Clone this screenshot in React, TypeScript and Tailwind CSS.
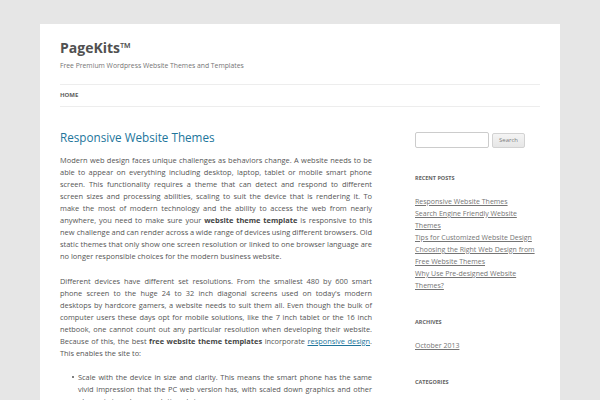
import React from "react";

const recentPosts = [
  "Responsive Website Themes",
  "Search Engine Friendly Website Themes",
  "Tips for Customized Website Design",
  "Choosing the Right Web Design from Free Website Themes",
  "Why Use Pre-designed Website Themes?",
];

const App = () => {
  return (
    <div className="min-h-[400px] bg-[#e6e6e6] pt-[24px] pl-[40px] pr-[40px] font-['Open_Sans',sans-serif]">
      <div className="bg-white px-[20px] pb-[40px]">
        {/* header */}
        <header className="pt-[16px]">
          <h1 className="text-[14px] leading-[16px] font-bold text-[#515151]">PageKits™</h1>
          <p className="mt-[5px] text-[6.8px] leading-[10px] text-[#757575]">
            Free Premium Wordpress Website Themes and Templates
          </p>
        </header>

        <nav className="mt-[13px] h-[23px] border-y border-[#ededed] flex items-center">
          <span className="text-[6px] font-bold uppercase text-[#5e5e5e]">Home</span>
        </nav>

        <div className="flex justify-between pt-[22px]">
          {/* main column */}
          <main className="w-[312px] text-[7.4px] leading-[12px] text-[#555]">
            <h2 className="text-[11.7px] leading-[16px] text-[#21759b]">Responsive Website Themes</h2>
            <p className="mt-[9px] text-justify text-[7.46px]">
              Modern web design faces unique challenges as behaviors change. A website needs to be able to
              appear on everything including desktop, laptop, tablet or mobile smart phone screen. This
              functionality requires a theme that can detect and respond to different screen sizes and
              processing abilities, scaling to suit the device that is rendering it. To make the most of
              modern technology and the ability to access the web from nearly anywhere, you need to make sure
              your <strong className="text-[#444]">website theme template</strong> is responsive to this new{" "}
              <span className="[word-spacing:-0.5px]">
                challenge and can render across a wide range of devices using different browsers. Old
              </span>{" "}
              static themes that only show one screen resolution or linked to one browser language are no
              longer responsible choices for the modern business website.
            </p>
            <p className="mt-[13px] text-justify">
              Different devices have different set resolutions. From the smallest 480 by 600 smart phone
              screen to the huge 24 to 32 inch diagonal screens used on today's modern desktops by hardcore
              gamers, a website needs to suit them all. Even though the bulk of computer users these days opt
              for mobile solutions, like the 7 inch tablet or the 16 inch netbook, one cannot count out any
              particular resolution when developing their website. Because of this, the best{" "}
              <strong className="text-[#444]">free website theme templates</strong> incorporate{" "}
              <a href="#" className="text-[#21759b] underline">responsive design</a>. This enables the site to:
            </p>
            <ul className="mt-[12px] text-justify">
              <li className="flex">
                <span className="w-[18px] shrink-0 flex justify-end pr-[4px] pt-[5px]">
                  <span className="block w-[2px] h-[2px] rounded-full bg-[#555]" />
                </span>
                <span>
                  Scale with the device in size and clarity. This means the smart phone has the same vivid
                  impression that the PC web version has, with scaled down graphics and other elements in a
                  clean, uncluttered view.
                </span>
              </li>
            </ul>
          </main>

          {/* sidebar */}
          <aside className="w-[125px] text-[7px] leading-[12px]">
            <div className="mt-[3px] flex items-center gap-[3px]">
              <input className="w-[74px] h-[16px] border border-[#ccc] rounded-[2px] bg-white" />
              <button className="h-[15px] px-[6px] border border-[#d2d2d2] rounded-[2px] bg-gradient-to-b from-[#f4f4f4] to-[#e6e6e6] text-[6px] text-[#7c7c7c]">
                Search
              </button>
            </div>

            <h3 className="mt-[26px] text-[5.5px] leading-[8px] font-bold uppercase text-[#636363]">Recent Posts</h3>
            <ul className="mt-[14px]">
              {recentPosts.map((post) => (
                <li key={post}>
                  <a href="#" className="text-[#757575] underline">{post}</a>
                </li>
              ))}
            </ul>

            <h3 className="mt-[26px] text-[5.5px] leading-[8px] font-bold uppercase text-[#636363]">Archives</h3>
            <ul className="mt-[14px]">
              <li>
                <a href="#" className="text-[#757575] underline">October 2013</a>
              </li>
            </ul>

            <h3 className="mt-[26px] text-[5.5px] leading-[8px] font-bold uppercase text-[#636363]">Categories</h3>
          </aside>
        </div>
      </div>
    </div>
  );
};

export default App;
